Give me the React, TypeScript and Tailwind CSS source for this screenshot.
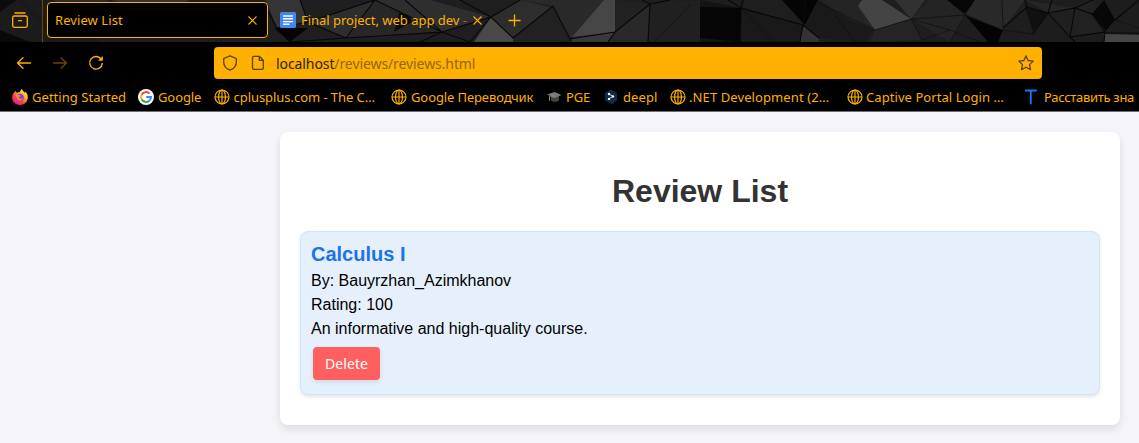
import React from "react";

const polygons: [string, string][] = [
  ["0,0 70,0 100,42 0,42", "#1e1e1e"],
  ["0,0 16,0 0,12", "#0d0d0d"],
  ["52,0 110,0 80,20", "#303030"],
  ["110,0 190,0 160,12", "#3a3a3a"],
  ["0,30 30,42 0,42", "#0a0a0a"],
  ["266,0 300,0 308,22 277,28", "#3b3b3b"],
  ["274,28 308,28 290,42", "#050505"],
  ["308,22 375,0 346,38", "#333333"],
  ["375,0 442,32 346,38", "#2c2c2c"],
  ["403,0 412,22 394,32", "#0e0e0e"],
  ["375,0 430,0 491,17 442,32", "#343434"],
  ["491,17 513,38 513,42 474,42", "#525252"],
  ["491,17 520,0 553,8 513,38", "#333333"],
  ["513,38 553,6 570,39 560,42 513,42", "#262626"],
  ["520,0 604,0 570,39 553,6", "#2f2f2f"],
  ["604,0 615,0 615,32 572,37", "#4f4f4f"],
  ["572,38 615,32 608,42 572,42", "#414141"],
  ["615,0 650,4 615,32", "#262626"],
  ["615,32 650,4 648,42 608,42", "#2e2e2e"],
  ["650,4 700,0 700,42 648,42", "#242424"],
  ["700,0 741,8 741,42 700,42", "#171717"],
  ["700,7 741,8 740,42 700,38", "#060606"],
  ["741,0 782,0 803,25 741,8", "#222222"],
  ["741,8 803,25 800,42 741,42", "#1d1d1d"],
  ["782,0 818,0 805,25", "#050505"],
  ["803,25 819,38 819,42 800,42", "#3a3a3a"],
  ["805,25 819,0 875,30 866,42 819,38", "#1d1d1d"],
  ["819,0 860,0 875,30 850,20", "#292929"],
  ["862,0 858,6 875,30 911,19 882,0", "#4e4e4e"],
  ["911,19 895,0 925,0", "#393939"],
  ["911,19 930,0 947,0 965,15 950,42", "#292929"],
  ["875,30 911,19 922,40 870,42", "#2a2a2a"],
  ["947,0 975,0 965,14", "#080808"],
  ["965,15 971,18 1003,30 998,42 988,42", "#040404"],
  ["975,0 1025,0 1002,30 966,14", "#2f2f2f"],
  ["1025,7 1048,13 1033,32", "#121212"],
  ["1025,0 1075,8 1048,13", "#2b2b2b"],
  ["1048,13 1075,8 1070,37", "#242424"],
  ["1075,8 1093,0 1105,32 1070,37", "#262626"],
  ["1104,0 1115,20 1106,31 1092,14", "#080808"],
  ["1115,20 1139,0 1139,34 1106,31", "#222222"],
  ["1104,34 1139,35 1139,42 1104,42", "#505050"],
];

const facetLines =
  "M266 8L277 28L290 42M277 28L308 22L346 38L290 42M300 0L308 22L375 0L346 38L442 32L375 0M442 32L491 17L460 0M405 0L442 32L420 42M442 32L470 42L491 17L513 38M491 17L520 0M513 38L553 6L570 39L615 32L650 4L642 0M615 32L608 42M650 4L670 0M650 4L648 42M728 0L741 8L743 0M741 8L740 42M741 8L803 25L800 42M803 25L819 38M1003 28L1027 7L1048 13L1075 8L1093 0M1025 0L1027 7M1048 13L1033 34M1048 13L1070 37L1075 8L1092 14L1105 32L1070 37M1048 13L1052 0M1115 20L1139 0M1105 32L1104 42M1070 37L1075 42M1105 33H1139";

const softLines =
  "M0 12L16 0M20 0L45 25L55 42M52 0L110 38M655 42L690 5M741 8L775 42M805 0L803 25M819 3L875 30M835 15L855 42M875 30L911 19L965 15L950 42M911 19L922 40L950 30L980 42M911 19L950 30M965 15L1003 30M1002 0L1003 28M1003 30L1033 34M1115 20L1139 28";

function Facets() {
  return (
    <svg className="absolute inset-0" width="1139" height="42" viewBox="0 0 1139 42">
      <defs>
        <linearGradient id="shade" x1="0" y1="0" x2="1" y2="0">
          <stop offset="0" stopColor="#000" stopOpacity="0.1" />
          <stop offset="1" stopColor="#000" stopOpacity="0.14" />
        </linearGradient>
      </defs>
      <rect width="1139" height="42" fill="#222" />
      {polygons.map(([points, fill]) => (
        <polygon key={points} points={points} fill={fill} />
      ))}
      <path d={softLines} fill="none" stroke="#111" strokeWidth=".7" />
      <path d={facetLines} fill="none" stroke="#080808" strokeWidth="1.1" />
      <rect width="1139" height="42" fill="url(#shade)" />
    </svg>
  );
}

function Globe() {
  return (
    <svg className="shrink-0" width="16" height="16" viewBox="0 0 16 16" fill="none" stroke="#ffb000" strokeWidth="1.2">
      <circle cx="8" cy="8" r="7" />
      <ellipse cx="8" cy="8" rx="3.4" ry="7" />
      <path d="M1 8H15M8 1V15" />
    </svg>
  );
}

function Firefox() {
  return (
    <svg className="shrink-0" width="16" height="16" viewBox="0 0 16 16">
      <defs>
        <linearGradient id="fox" x1="0.85" y1="0.1" x2="0.2" y2="0.95">
          <stop offset="0" stopColor="#fff04a" />
          <stop offset="0.35" stopColor="#ffa51f" />
          <stop offset="0.65" stopColor="#ff4246" />
          <stop offset="1" stopColor="#e31587" />
        </linearGradient>
      </defs>
      <path d="M2.8 3.1C2.9 2.3 3.4 1.8 3.4 1.8C3.6 3 4.5 3.6 5.3 3.7C6.1 3.2 7.1 3 8 3.1C8 1.8 9 .6 10 0C10.2 1.7 11.8 2.4 12.7 3.7C13 3.3 13 2.8 12.8 2.4C15 4 16 6.2 15.8 8.8C15.4 13 12.2 16 8 16C3.5 16 .2 12.7.2 8.5C.2 6.3 1.2 4.3 2.8 3.1Z" fill="url(#fox)" />
      <circle cx="8" cy="8.6" r="3.8" fill="#7b41d8" />
      <path d="M3.3 5.6C5 4.9 6.6 5.1 7.6 6.3C9 6.4 9 7.6 7.7 7.7C6.6 8 6.6 9.3 7.7 9.6C9 10 10 9.4 11 9.3C10.3 11.5 7.7 12.3 5.9 11.1C4 9.9 4.6 7.5 3.3 5.6Z" fill="#ff7e2c" />
    </svg>
  );
}

function Google() {
  return (
    <svg className="shrink-0" width="16" height="16" viewBox="0 0 16 16">
      <circle cx="8" cy="8" r="8" fill="#fff" />
      <g fill="none" strokeWidth="2">
        <path d="M11.6 4.6A5 5 0 0 0 3.6 5.7" stroke="#ea4335" />
        <path d="M3.6 5.7A5 5 0 0 0 3.6 10.3" stroke="#fbbc05" />
        <path d="M3.6 10.3A5 5 0 0 0 11.3 11.7" stroke="#34a853" />
        <path d="M11.3 11.7A5 5 0 0 0 13 8H8.2" stroke="#4285f4" />
      </g>
    </svg>
  );
}

function Cap() {
  return (
    <svg className="shrink-0" width="16" height="16" viewBox="0 0 16 16">
      <path d="M4 7V11.5C6 13.3 10 13.3 12 11.5V7Z" fill="#3f4346" />
      <path d="M0 5.5L7.5 3L14.5 6L7.3 9.3Z" fill="#777b7e" />
      <path d="M7 6L2.5 7.5V12" fill="none" stroke="#a27d3b" strokeWidth="1" />
    </svg>
  );
}

function Deepl() {
  return (
    <svg className="shrink-0" width="16" height="16" viewBox="0 0 16 16">
      <path d="M7 .5L13 4V11.5L9.5 13.5V15.5L7 14.5L1 11.5V4Z" fill="#0f2b46" />
      <path d="M5 5L9 7.4L5 9.8" fill="none" stroke="#fff" strokeWidth=".8" />
      <g fill="#fff">
        <circle cx="5" cy="5" r="1.2" />
        <circle cx="9" cy="7.4" r="1.2" />
        <circle cx="5" cy="9.9" r="1.2" />
      </g>
    </svg>
  );
}

function BlueT() {
  return (
    <svg className="shrink-0" width="16" height="16" viewBox="0 0 16 16">
      <path d="M2 1.5H13.7M7.8 1.5V15.3" fill="none" stroke="#0a7cff" strokeWidth="1.8" />
    </svg>
  );
}

function Close() {
  return (
    <svg className="shrink-0" width="9" height="9" viewBox="0 0 9 9" fill="none" stroke="#ffb000" strokeWidth="1.1">
      <path d="M.5 .5L8.5 8.5M8.5 .5L.5 8.5" />
    </svg>
  );
}

const bookmarks = [
  { icon: <Firefox />, label: "Getting Started", box: "w-[126px] gap-1", text: "tracking-[0.04px]" },
  { icon: <Google />, label: "Google", box: "w-[75.5px] gap-1", text: "tracking-[-0.1px]" },
  { icon: <Globe />, label: "cplusplus.com - The C…", box: "w-[177.5px] gap-1", text: "tracking-[-0.05px]" },
  { icon: <Globe />, label: "Google Переводчик", box: "w-[156px] gap-1", text: "tracking-[-0.1px]" },
  { icon: <Cap />, label: "PGE", box: "w-[57px] gap-[3px]", text: "tracking-[-0.2px]" },
  { icon: <Deepl />, label: "deepl", box: "w-[66px] gap-[3px]", text: "tracking-[0.1px]" },
  { icon: <Globe />, label: ".NET Development (2…", box: "w-[177px] gap-[3px]", text: "tracking-[0.1px]" },
  { icon: <Globe />, label: "Captive Portal Login …", box: "w-[176px] gap-[3px]", text: "tracking-[0.07px]" },
  { icon: <BlueT />, label: "Расставить зна", box: "w-[130px] gap-[5px]", text: "tracking-[-0.3px]" },
];

function TabStrip() {
  return (
    <div className="relative h-[42px] overflow-hidden bg-[#222222]">
      <Facets />
      <div className="relative flex h-full items-start text-[13px] leading-[18px] text-[#ffb000]">
        <div className="flex h-full w-[42px] items-start pt-3 pl-3">
          <svg width="16" height="16" viewBox="0 0 16 16" fill="none" stroke="#ffb000" strokeWidth="1.3" strokeLinecap="round">
            <path d="M3 1H13" />
            <path d="M.7 5.5A1.5 1.5 0 0 1 2.2 4H13.8A1.5 1.5 0 0 1 15.3 5.5V13.5A1.8 1.8 0 0 1 13.5 15.3H2.5A1.8 1.8 0 0 1 .7 13.5Z" />
            <path d="M6.5 8.7H9.5" />
          </svg>
        </div>
        <div className="h-full w-px bg-[#6b4a00]" />
        <div className="mt-[2px] ml-1 flex h-9 w-[221px] items-center justify-between rounded-[4px] border border-[#ffb000] bg-black pr-[10px] pl-[7px]">
          <span className="tracking-[0.08px]">Review List</span>
          <Close />
        </div>
        <div className="mt-[2px] ml-3 flex h-9 items-center">
          <svg width="16" height="16" viewBox="0 0 16 16">
            <rect width="16" height="16" rx="1.5" fill="#4285f4" />
            <path d="M3 4H13M3 6.8H13M3 9.6H13M3 12.3H9.5" stroke="#fff" strokeWidth="1.4" />
          </svg>
          <span className="ml-[5px] w-[166px] overflow-hidden whitespace-nowrap tracking-[-0.02px]">
            Final project, web app dev <span className="opacity-50">-</span>
          </span>
          <span className="ml-[6px]"><Close /></span>
          <svg className="ml-[26px]" width="13" height="13" viewBox="0 0 13 13" fill="none" stroke="#ffb000" strokeWidth="1.3">
            <path d="M6.5 .5V12.5M.5 6.5H12.5" />
          </svg>
        </div>
      </div>
    </div>
  );
}

function NavBar() {
  return (
    <div className="flex h-[42px] items-center bg-black pl-4">
      <svg width="16" height="16" viewBox="0 0 16 16" fill="none" stroke="#ffb000" strokeWidth="1.4" strokeLinecap="round" strokeLinejoin="round">
        <path d="M14.5 8H1.5M7 2.8L1.5 8L7 13.2" />
      </svg>
      <svg className="ml-5" width="16" height="16" viewBox="0 0 16 16" fill="none" stroke="#664700" strokeWidth="1.4" strokeLinecap="round" strokeLinejoin="round">
        <path d="M1.5 8H14.5M9 2.8L14.5 8L9 13.2" />
      </svg>
      <svg className="ml-5" width="16" height="16" viewBox="0 0 16 16" fill="none" stroke="#ffb000" strokeWidth="1.4" strokeLinecap="round">
        <path d="M13.2 4.2A6.3 6.3 0 1 0 14.3 8.4" />
        <path d="M14.8 1V5.8H10Z" fill="#ffb000" stroke="none" />
      </svg>
      <div className="ml-[110px] flex h-8 w-[828px] items-center rounded-[4px] bg-[#ffb000] px-2">
        <svg width="16" height="16" viewBox="0 0 16 16" fill="none" stroke="#59400a" strokeWidth="1.3" strokeLinejoin="round">
          <path d="M8 .8L14.3 3.5V7C14.3 10.6 11.6 13.8 8 15.2C4.4 13.8 1.7 10.6 1.7 7V3.5Z" />
        </svg>
        <svg className="ml-3" width="16" height="16" viewBox="0 0 16 16" fill="none" stroke="#59400a" strokeWidth="1.3" strokeLinejoin="round">
          <path d="M9.3 1.3H3.8A1.3 1.3 0 0 0 2.5 2.6V13A1.3 1.3 0 0 0 3.8 14.3H12A1.3 1.3 0 0 0 13.3 13V5.3ZM9.3 1.3V5.3H13.3" />
        </svg>
        <span className="ml-[10px] pt-px text-sm leading-5 tracking-[-0.09px] text-[#8f6812]">
          <span className="text-[#2d2410]">localhost</span>/reviews/reviews.html
        </span>
        <svg className="ml-auto" width="16" height="16" viewBox="0 0 16 16" fill="none" stroke="#59400a" strokeWidth="1.3" strokeLinejoin="round">
          <path d="M8 .9L10.1 5.5L15.2 6.1L11.5 9.6L12.5 14.7L8 12.2L3.5 14.7L4.5 9.6L.8 6.1L5.9 5.5Z" />
        </svg>
      </div>
    </div>
  );
}

function BookmarkBar() {
  return (
    <div className="flex h-7 items-center overflow-hidden border-b border-[#6e6e6e] bg-black pb-px pl-3 text-[13px] leading-[18px] text-[#ffb000]">
      {bookmarks.map((b, i) => (
        <div key={i} className={`flex shrink-0 items-center whitespace-nowrap ${b.box}`}>
          {b.icon}
          <span className={b.text}>{b.label}</span>
        </div>
      ))}
    </div>
  );
}

export default function App() {
  return (
    <div className="flex h-[443px] w-[1139px] flex-col overflow-hidden bg-[#f4f4f9] font-['Noto_Sans',sans-serif]">
      <TabStrip />
      <NavBar />
      <BookmarkBar />
      <main className="flex-1 pt-5 pl-[280px] font-['Liberation_Sans',Arial,sans-serif]">
        <section className="h-[293px] w-[840px] rounded-lg bg-white px-5 pt-[41px] shadow-[0_4px_8px_rgba(0,0,0,0.1)]">
          <h1 className="text-center text-[32px] leading-9 font-bold text-[#333333]">Review List</h1>
          <article className="mt-[22px] h-[164px] rounded-lg border border-[#d1e3f6] bg-[#e6f0fd] p-[10px] text-black shadow-[0_2px_4px_rgba(0,0,0,0.1)]">
            <h2 className="mb-[3px] text-xl leading-6 font-bold text-[#1a73e8]">Calculus I</h2>
            <p className="leading-6">By: Bauyrzhan_Azimkhanov</p>
            <p className="leading-6">Rating: 100</p>
            <p className="leading-6">An informative and high-quality course.</p>
            <button className="mt-[6px] ml-[2px] block h-[33px] w-[67px] rounded-[4px] bg-[#ff5f5f] font-['Noto_Sans',sans-serif] text-sm leading-[33px] tracking-[0.1px] text-white shadow-[0_2px_4px_rgba(0,0,0,0.1)]">
              Delete
            </button>
          </article>
        </section>
      </main>
    </div>
  );
}
